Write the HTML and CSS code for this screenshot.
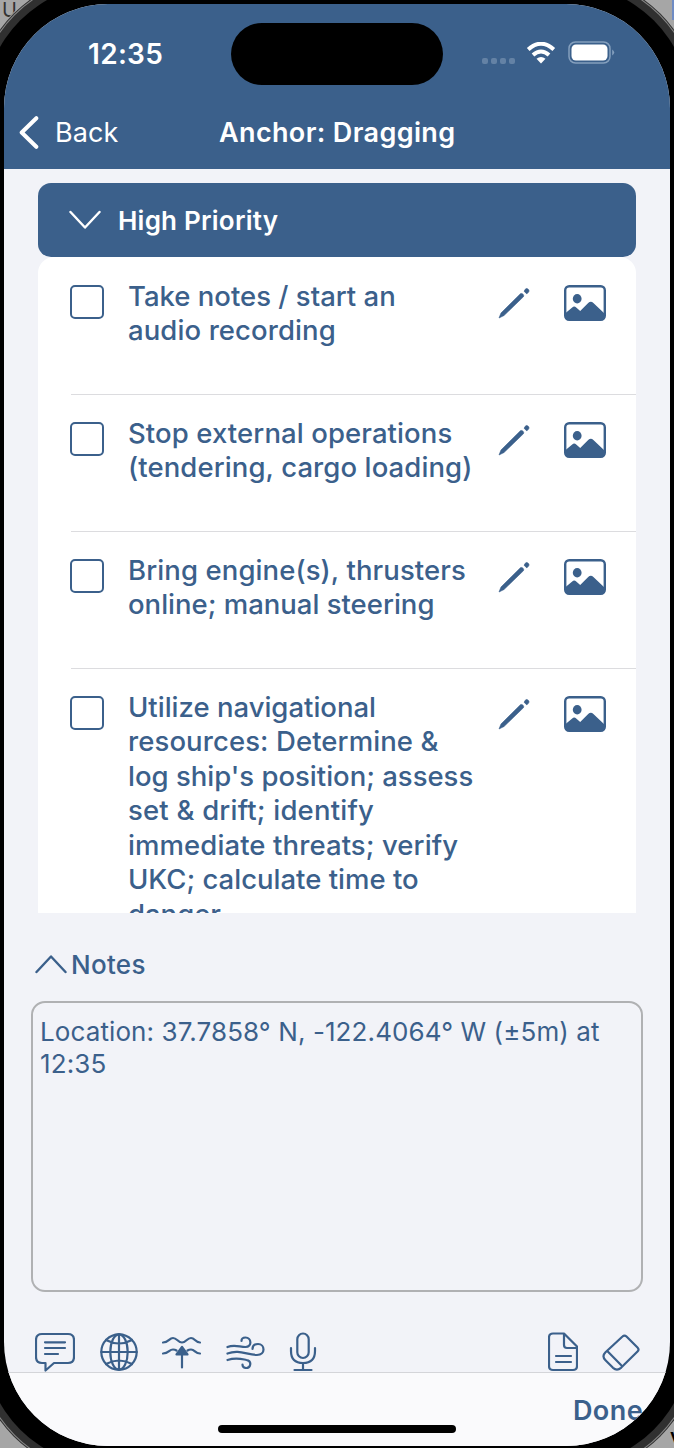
FILE: index.html
```html
<!DOCTYPE html>
<html lang="en">
<head>
<meta charset="utf-8">
<title>Anchor: Dragging</title>
<link rel="stylesheet" href="styles.css">
</head>
<body>
<span class="desk desk-u">U</span><span class="desk desk-v">v</span><span class="desk desk-blue"></span>
<svg class="defs" width="0" height="0" aria-hidden="true">
  <symbol id="pencil" viewBox="0 0 32 32"><path d="M1 31 3 26 22.400 6.800c1.600-1.200 4.200 1 3 3L6 28.500Z" fill="currentColor" stroke="currentColor" stroke-width=".6"/><path d="M26 4.200 27.500 2c1.600-1.500 4.600 1.100 3.100 3L28.800 6.900Z" fill="currentColor" stroke="currentColor" stroke-width=".6"/></symbol>
  <symbol id="photo" viewBox="0 0 42 36"><rect x="1.200" y="1.200" width="39.600" height="33.600" rx="4" fill="none" stroke="currentColor" stroke-width="2.400"/><ellipse cx="13.200" cy="13.700" rx="4.400" ry="4.700" fill="currentColor"/><path d="M1 28.500 8.200 22.400q2-1.800 4 0l4 3.700 8-8q2.600-2.500 5.200 0L41 29v3q0 3-4 3H5q-4 0-4-3Z" fill="currentColor"/></symbol>
</svg>
<div class="phone">
  <header class="top">
    <div class="status">
      <span class="time">12:35</span>
      <span class="island"></span>
      <span class="indicators">
        <span class="dots"><i></i><i></i><i></i><i></i></span>
        <svg class="wifi" viewBox="0 0 30 22"><g fill="none" stroke="#fff" stroke-width="4"><path d="M2.200 7.500Q15-4 27.800 7.500"/><path d="M7 13q8-7 16 0"/></g><path d="M10.500 16.800q4.500-3.600 9 0L15 21.500Z" fill="#fff"/></svg>
        <svg class="battery" viewBox="0 0 47 23"><rect x="1" y="1" width="41" height="21" rx="6.500" fill="none" stroke="#849fbd" stroke-width="1.500"/><rect x="3.500" y="3.500" width="36" height="16" rx="4.500" fill="#fff"/><path d="M44.200 8.500q4 3 0 6Z" fill="#849fbd"/></svg>
      </span>
    </div>
    <nav class="nav">
      <span class="back"><svg width="20" height="33" viewBox="0 0 20 33"><path d="m17.300 2.200L2.700 16.500l14.600 14.300" fill="none" stroke="#fff" stroke-width="4" stroke-linecap="round" stroke-linejoin="round"/></svg><span class="back-label">Back</span></span>
      <h1 class="title">Anchor: Dragging</h1>
    </nav>
  </header>
  <main class="content">
    <section class="checklist">
      <h2 class="priority"><svg width="32" height="20" viewBox="0 0 32 20"><path d="M1.500 2 16 17.500 30.500 2" fill="none" stroke="#fff" stroke-width="2.400" stroke-linecap="round" stroke-linejoin="round"/></svg><span class="priority-label">High Priority</span></h2>
      <ul class="items">
        <li class="item"><span class="check"></span><p class="label">Take notes / start an<br><span class="wide">audio recording</span></p><svg class="pencil"><use href="#pencil"/></svg><svg class="photo"><use href="#photo"/></svg></li>
        <li class="item"><span class="check"></span><p class="label"><span class="wide">Stop external operations</span><br><span class="wide">(tendering, cargo loading)</span></p><svg class="pencil"><use href="#pencil"/></svg><svg class="photo"><use href="#photo"/></svg></li>
        <li class="item"><span class="check"></span><p class="label"><span class="wide">Bring engine(s), thrusters</span><br>online; manual steering</p><svg class="pencil"><use href="#pencil"/></svg><svg class="photo"><use href="#photo"/></svg></li>
        <li class="item"><span class="check"></span><p class="label">Utilize navigational<br><span class="wide">resources: Determine &amp;</span><br>log ship's position; assess<br><span class="wider">set &amp; drift; identify</span><br><span class="wide">immediate threats; verify</span><br>UKC; calculate time to<br>danger</p><svg class="pencil"><use href="#pencil"/></svg><svg class="photo"><use href="#photo"/></svg></li>
      </ul>
    </section>
    <h2 class="notes-head"><svg width="32" height="20" viewBox="0 0 32 20"><path d="M1.500 18 16 2.500 30.500 18" fill="none" stroke="currentColor" stroke-width="2.400" stroke-linecap="round" stroke-linejoin="round"/></svg><span class="notes-label">Notes</span></h2>
    <div class="notes">Location: 37.7858° N, -122.4064° W (±5m) at<br>12:35</div>
    <div class="tools">
      <svg width="40" height="40" viewBox="0 0 40 40"><path d="M7 2h26q6 0 6 6v17q0 6-6 6H19l-8.500 7.500V31H7q-6 0-6-6V8q0-6 6-6Z"/><path d="M10 10.300h20M10 16h20M10 22h13"/></svg>
      <svg width="38" height="38" viewBox="0 0 38 38"><circle cx="19" cy="19" r="17.700"/><ellipse cx="19" cy="19" rx="8.700" ry="17.700"/><path d="M19 1.300v35.400M1.300 19h35.400M6 7q13 7 26 0M6 31q13-7 26 0"/></svg>
      <svg width="39" height="34" viewBox="0 0 39 34"><path d="M1 7.500c6 0 6-4.500 10-4.500s5 4.500 9 4.500S25 3 29 3s4 4.500 9 4.500M1 18.500c6 0 6-4 10-4q2 0 3.500 1M38 18.500c-5 0-5-4-9-4q-2 0-3.500 1M20 32.500V18"/><path d="m20 12 5.500 7.500h-11Z" fill="currentColor"/></svg>
      <svg width="39" height="34" viewBox="0 0 39 34"><path d="M1.500 12c7-3 12 0 18 0 7 0 6-9.500 0-9.500q-4 0-4 3.500M1.500 18.500C13 14 21 20 31 20c9 0 8-11 1-11q-5.500 0-5.500 5M1.500 25c9-3 14-1 19 0 6 1 4 8 0 8q-4 0-4-3.500"/></svg>
      <svg width="28" height="40" viewBox="0 0 28 40"><rect x="8.300" y="1.500" width="11.400" height="24.500" rx="5.700"/><path d="M2 16v3q0 12 12 12t12-12v-3M14 31v7M5.500 38h17"/></svg>
      <svg class="doc" width="30" height="40" viewBox="0 0 30 40"><path d="M5 1.500h11L29 14.500V34q0 4-4 4H5q-4 0-4-4V5.500q0-4 4-4ZM16 2v11q0 3 3 3h10M8 24h15M8 30h15"/></svg>
      <svg width="38" height="38" viewBox="0 0 38 38"><path d="M20.500 3.500q2-2 4 0l11 11q2 2 0 4L19 34.800q-4 3.500-8 0l-7.500-7.500q-4-4 0-8ZM6 18.800 19 32"/></svg>
    </div>
  </main>
  <footer class="bar"><span class="done">Done</span><span class="home"></span></footer>
</div>
</body>
</html>
```
FILE: styles.css
```css
* { box-sizing: border-box; }
html { height: 100%; overflow: hidden; background: #a6a6a6; }
body { margin: 0; height: 1448px; padding: 4px 4px 2px; overflow: hidden; background: #a6a6a6; font-family: Inter, "Noto Sans", sans-serif; color: #3b608b; }
h1, h2, p, ul { margin: 0; padding: 0; }
.defs { display: none; }
.desk { position: absolute; color: #333; font-size: 20px; line-height: 24px; }
.desk-u { left: 2px; top: -2px; }
.desk-v { left: 670px; top: 1424px; width: 4px; overflow: hidden; color: #000; font-weight: 600; }
.desk-blue { left: 672px; top: 0; width: 2px; height: 20px; background: #6f8cc4; }
.phone { position: relative; display: flex; flex-direction: column; height: 1442px; border-radius: 104px; overflow: hidden; background: #f2f3f8; box-shadow: 0 0 0 20px #000, 0 0 0 27.500px #303030, 0 0 0 28.500px #888, 0 0 0 29.500px #333, 0 0 0 30.500px #aaa; }
.top { height: 165px; background: #3b608b; color: #fff; flex: none; }
.status { display: grid; grid-template-columns: 227px 212px 1fr; height: 100px; padding-top: 19px; }
.time { padding-left: 84px; font-size: 28px; font-weight: 600; line-height: 62px; letter-spacing: .3px; }
.island { height: 62px; border-radius: 31px; background: #000; }
.indicators { display: flex; align-items: flex-start; padding: 19px 0 0 39px; }
.dots { display: flex; gap: 3px; padding-top: 16px; }
.dots i { width: 6px; height: 6px; border-radius: 2px; background: #6482a5; }
.wifi { width: 30px; height: 22px; margin: 0 0 0 11px; }
.battery { width: 47px; height: 23px; margin: -1px 0 0 12px; }
.nav { display: grid; grid-template-columns: 215px 1fr; height: 56px; align-items: center; }
.back { display: flex; align-items: center; gap: 16px; padding-left: 15px; font-size: 27px; letter-spacing: .1px; }
.title { font-size: 27px; font-weight: 600; white-space: nowrap; letter-spacing: .36px; }
.content { padding: 14px 0 0; height: 1203px; flex: none; }
.checklist { height: 730px; margin: 0 34px; overflow: hidden; }
.priority { display: flex; align-items: center; gap: 17px; height: 74px; padding-left: 31px; background: #3b608b; color: #fff; border-radius: 13px; font-size: 26px; font-weight: 600; letter-spacing: .22px; }
.items { list-style: none; height: 656px; padding-top: 1px; overflow: hidden; background: #fff; border-radius: 16px 16px 0 0; }
.item { display: grid; grid-template-columns: 33px 346px 32px 42px; column-gap: 24px; align-items: start; height: 137px; margin-left: 33px; padding-top: 21px; border-bottom: 1px solid #dcdcdf; }
.item:last-child { height: 320px; border: 0; }
.check { width: 34px; height: 34px; margin: 6px 0 0 -1px; border: 2.500px solid #3b608b; border-radius: 5px; }
.label { font-size: 27.500px; font-weight: 500; line-height: 34.450px; white-space: nowrap; letter-spacing: 0; }
.wide { letter-spacing: .1px; }
.wider { letter-spacing: .2px; }
.pencil { width: 32px; height: 32px; margin: 8px 0 0 0; }
.photo { width: 42px; height: 36px; margin: 6px 0 0 10px; }
.notes-head { display: flex; align-items: center; gap: 4px; height: 34px; margin: 34px 0 0 31px; font-size: 26px; font-weight: 500; letter-spacing: .3px; }
.notes { height: 291px; margin: 20px 27px 0; padding: 13px 7px; border: 2px solid #b0b1b3; border-radius: 14px; font-size: 26px; line-height: 32px; white-space: nowrap; letter-spacing: .1px; }
.tools { display: flex; align-items: center; margin: 40px 30px 0 31px; height: 40px; }
.tools svg { flex: none; fill: none; stroke: currentColor; stroke-width: 2.200; stroke-linecap: round; stroke-linejoin: round; margin-right: 24.500px; }
.tools .doc { margin-left: auto; }
.tools svg:last-child { margin-right: 0; }
.bar { display: grid; height: 75px; border-top: 1px solid #d4d5d9; background: #fafafc; justify-items: center; align-content: start; flex: none; }
.done { justify-self: end; padding: 22px 27px 0 0; font-size: 27px; line-height: 32px; font-weight: 600; letter-spacing: .4px; }
.home { width: 238px; height: 8px; margin-top: -2px; border-radius: 4px; background: #000; }
```
